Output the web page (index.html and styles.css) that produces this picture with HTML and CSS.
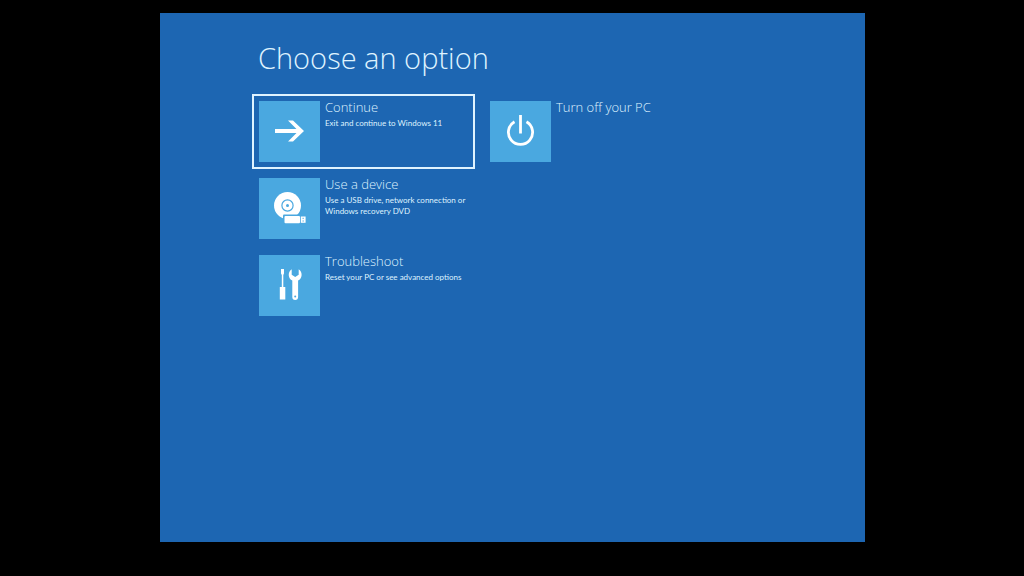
FILE: index.html
```
<!DOCTYPE html>
<html lang="en">
<head>
<meta charset="utf-8">
<title>Choose an option</title>
<link rel="stylesheet" href="styles.css">
</head>
<body>
<main class="screen">
  <h1 class="heading">Choose an option</h1>
  <div class="options">
    <div class="column">
      <button class="option selected" type="button">
        <span class="tile">
          <svg class="icon" viewBox="0 0 61 61" aria-hidden="true"><path d="M29 19.500H34L45 30L34 40.500H29L39.500 30z" fill="#fff"/><path d="M16 30H41" stroke="#fff" stroke-width="4"/></svg>
        </span>
        <span class="text"><span class="name">Continue</span><span class="detail">Exit and continue to Windows 11</span></span>
      </button>
      <button class="option" type="button">
        <span class="tile">
          <svg class="icon" viewBox="0 0 61 61" aria-hidden="true">
            <circle cx="28.500" cy="27.500" r="13.500" fill="#fff"/>
            <circle cx="28.500" cy="27.500" r="5.600" fill="none" stroke="#4aa8e0" stroke-width="1.200"/>
            <circle cx="28.500" cy="27.500" r="1.500" fill="#4aa8e0"/>
            <rect x="24" y="36.500" width="19" height="10" rx="1" fill="#4aa8e0"/>
            <rect x="25.500" y="38" width="15.500" height="7.300" rx="1" fill="#fff"/>
            <rect x="41.800" y="38.500" width="4.800" height="6.300" fill="#fff"/>
            <path d="M43.500 40.300h1.300M43.500 43h1.300" stroke="#4aa8e0" stroke-width="1"/>
          </svg>
        </span>
        <span class="text"><span class="name">Use a device</span><span class="detail">Use a USB drive, network connection or Windows recovery DVD</span></span>
      </button>
      <button class="option" type="button">
        <span class="tile">
          <svg class="icon" viewBox="0 0 61 61" aria-hidden="true">
            <path d="M22 14h3v4.500l-.7 1.500v12h2v12.500h-5.500V32h2V20l-.8-1.500z" fill="#fff"/>
            <path d="M32.700 14.200c-4.500 3-3.500 9.500.6 11.300V42a2.900 2.900 0 0 0 5.800 0V25.500c4.200-1.800 5-8.300.6-11.300v5.500l-3.500 2.300-3.500-2.300z" fill="#fff"/>
            <circle cx="36.200" cy="41.600" r="1" fill="#4aa8e0"/>
          </svg>
        </span>
        <span class="text"><span class="name">Troubleshoot</span><span class="detail">Reset your PC or see advanced options</span></span>
      </button>
    </div>
    <div class="column">
      <button class="option" type="button">
        <span class="tile">
          <svg class="icon" viewBox="0 0 61 61" aria-hidden="true"><path d="M30.500 14V32.500M24.500 20.800A12.100 12.100 0 1 0 36.500 20.800" fill="none" stroke="#fff" stroke-width="2.800"/></svg>
        </span>
        <span class="text"><span class="name">Turn off your PC</span></span>
      </button>
    </div>
  </div>
</main>
</body>
</html>
```
FILE: styles.css
```
* { box-sizing: border-box; }

body {
  margin: 0;
  min-height: 100vh;
  display: flex;
  padding: 13px 159px 34px 160px;
  background: #000;
  color: #dff3ff;
  font-family: "Open Sans", "Noto Sans", sans-serif;
}

.screen {
  flex: 1;
  padding: 25px 92px;
  background: #1d66b2;
}

.heading {
  margin: 0 0 16px;
  padding-left: 6px;
  font-size: 29px;
  font-weight: 300;
  line-height: 40px;
}

.options { display: flex; gap: 8px; }

.column {
  display: flex;
  flex-direction: column;
  gap: 2px;
  flex: 0 1 223px;
}

.option {
  display: flex;
  align-items: flex-start;
  gap: 5px;
  padding: 5px;
  border: 2px solid transparent;
  background: none;
  color: inherit;
  font-family: inherit;
  text-align: left;
}

.selected { border-color: #dff3ff; }

.tile {
  flex: none;
  width: 61px;
  height: 61px;
  background: #4aa8e0;
}

.icon { display: block; width: 100%; height: 100%; }

.text { display: flex; flex-direction: column; gap: 4px; }

.name {
  font-size: 13px;
  font-weight: 300;
  line-height: 13px;
}

.detail {
  font-family: Lato, "Open Sans", sans-serif;
  font-size: 8px;
  line-height: 11px;
}
```
